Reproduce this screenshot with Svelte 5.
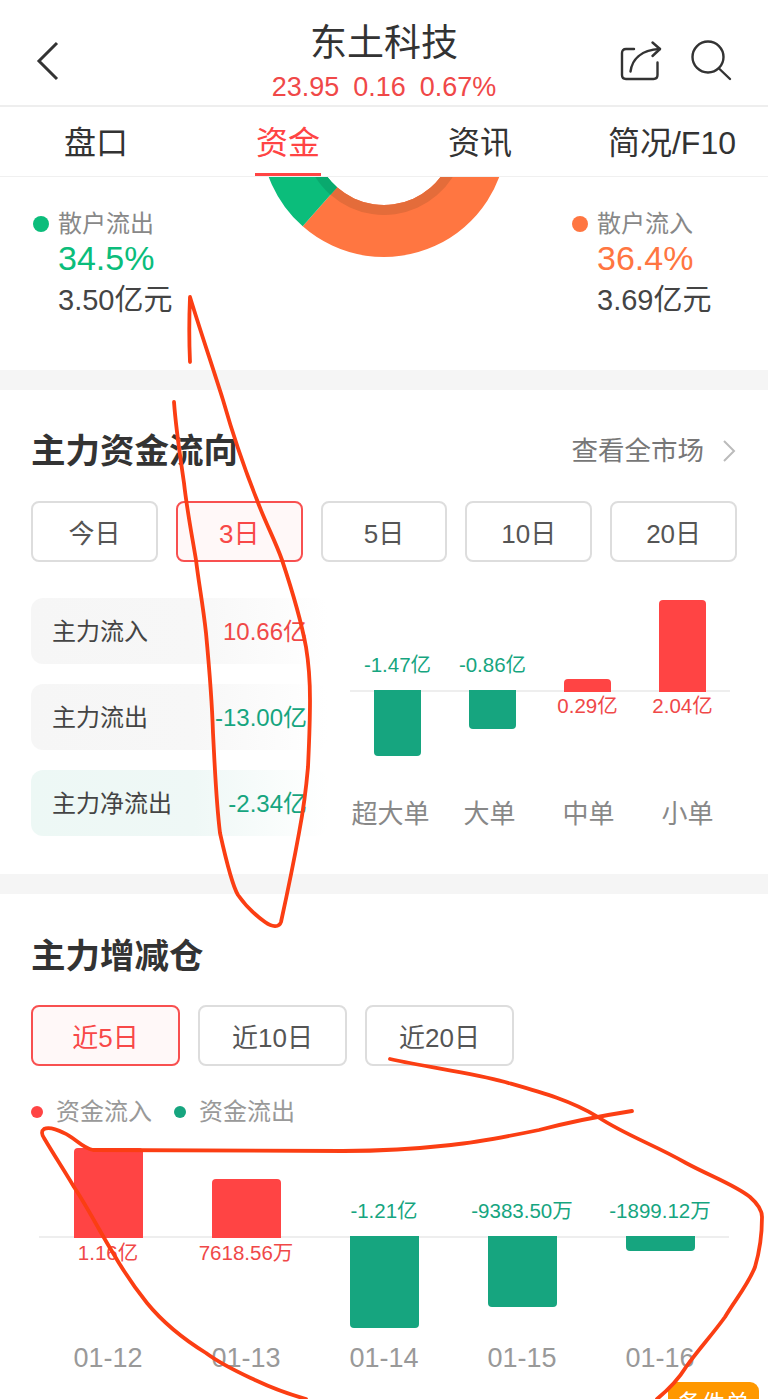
<script>
  const tabs = ['盘口', '资金', '资讯', '简况/F10'];
  const flowRanges = ['今日', '3日', '5日', '10日', '20日'];
  const holdRanges = ['近5日', '近10日', '近20日'];

  const flowRows = [
    { label: '主力流入', value: '10.66亿', tone: 'up' },
    { label: '主力流出', value: '-13.00亿', tone: 'down' },
    { label: '主力净流出', value: '-2.34亿', tone: 'down', net: true }
  ];

  // heights are in pixels above or below the zero line
  const orderBars = [
    { name: '超大单', value: '-1.47亿', height: 66, up: false },
    { name: '大单', value: '-0.86亿', height: 39, up: false },
    { name: '中单', value: '0.29亿', height: 13, up: true },
    { name: '小单', value: '2.04亿', height: 92, up: true }
  ];

  const dayBars = [
    { date: '01-12', value: '1.16亿', height: 90, up: true },
    { date: '01-13', value: '7618.56万', height: 59, up: true },
    { date: '01-14', value: '-1.21亿', height: 92, up: false },
    { date: '01-15', value: '-9383.50万', height: 71, up: false },
    { date: '01-16', value: '-1899.12万', height: 15, up: false }
  ];
</script>

<div class="page">
  <header class="topbar">
    <svg class="back" width="24" height="40" viewBox="0 0 24 40">
      <path d="M21 2 L3 20 L21 38" />
    </svg>
    <div class="stock">
      <div class="stock-name">东土科技</div>
      <div class="stock-quote">
        <span>23.95</span><span>0.16</span><span>0.67%</span>
      </div>
    </div>
    <div class="actions">
      <svg width="42" height="42" viewBox="0 0 42 42">
        <path d="M14 9 H6 Q2 9 2 13 V35 Q2 39 6 39 H33.5 Q37.5 39 37.5 35 V22.5" />
        <path d="M10.5 31.5 C12 20 20 10 40 9" />
        <path d="M32.5 2.5 L40 9 L32.5 16" />
      </svg>
      <svg width="42" height="42" viewBox="0 0 42 42">
        <circle cx="18" cy="17" r="15.5" />
        <path d="M29 28.5 L40 39" />
      </svg>
    </div>
  </header>

  <nav class="tabs">
    {#each tabs as tab, i}
      <div class="tab" class:on={i === 1}>{tab}</div>
    {/each}
  </nav>

  <section class="retail">
    <div class="side">
      <div class="side-title"><i class="dot green"></i>散户流出</div>
      <div class="side-pct green-text">34.5%</div>
      <div class="side-amt">3.50亿元</div>
    </div>
    <svg class="donut" width="262" height="81" viewBox="253 177 262 81">
      <path d="M302.7 226.3 A123 123 0 0 0 507 134 L455 134 A71 71 0 0 1 337.1 187.3 Z" fill="#ff7641" />
      <path d="M330.5 194.8 A81 81 0 0 0 465 134 L455 134 A71 71 0 0 1 337.1 187.3 Z" fill="#e46c3a" />
      <path d="M302.7 226.3 A123 123 0 0 1 261 134 L313 134 A71 71 0 0 0 337.1 187.3 Z" fill="#0bbd7b" />
      <path d="M330.5 194.8 A81 81 0 0 1 303 134 L313 134 A71 71 0 0 0 337.1 187.3 Z" fill="#0aa96e" />
    </svg>
    <div class="side right">
      <div class="side-title"><i class="dot orange"></i>散户流入</div>
      <div class="side-pct orange-text">36.4%</div>
      <div class="side-amt">3.69亿元</div>
    </div>
  </section>

  <section class="card flow">
    <div class="card-head">
      <h2>主力资金流向</h2>
      <div class="more">
        <span>查看全市场</span>
        <svg width="14" height="24" viewBox="0 0 14 24"><path d="M2 2 L12 12 L2 22" /></svg>
      </div>
    </div>

    <div class="ranges five">
      {#each flowRanges as r, i}
        <div class="range" class:on={i === 1}>{r}</div>
      {/each}
    </div>

    <div class="flow-body">
      <div class="rows">
        {#each flowRows as row}
          <div class="row" class:net={row.net}>
            <span>{row.label}</span>
            <span class="row-val {row.tone}">{row.value}</span>
          </div>
        {/each}
      </div>

      <div class="orders">
        <div class="order-chart">
          {#each orderBars as bar}
            <div class="col">
              <div class="above">
                {#if bar.up}
                  <div class="bar up-bar" style="height: {bar.height}px"></div>
                {:else}
                  <div class="bar-val down">{bar.value}</div>
                {/if}
              </div>
              <div class="below">
                {#if bar.up}
                  <div class="bar-val up">{bar.value}</div>
                {:else}
                  <div class="bar down-bar" style="height: {bar.height}px"></div>
                {/if}
              </div>
            </div>
          {/each}
        </div>
        <div class="order-names">
          {#each orderBars as bar}
            <div>{bar.name}</div>
          {/each}
        </div>
      </div>
    </div>
  </section>

  <section class="card hold">
    <div class="card-head">
      <h2>主力增减仓</h2>
    </div>

    <div class="ranges three">
      {#each holdRanges as r, i}
        <div class="range" class:on={i === 0}>{r}</div>
      {/each}
    </div>

    <div class="legend">
      <i class="mini red"></i><span>资金流入</span>
      <i class="mini teal"></i><span>资金流出</span>
    </div>

    <div class="day-chart">
      {#each dayBars as bar}
        <div class="col">
          <div class="above">
            {#if bar.up}
              <div class="bar up-bar" style="height: {bar.height}px"></div>
            {:else}
              <div class="bar-val down">{bar.value}</div>
            {/if}
          </div>
          <div class="below">
            {#if bar.up}
              <div class="bar-val up">{bar.value}</div>
            {:else}
              <div class="bar down-bar" style="height: {bar.height}px"></div>
            {/if}
          </div>
        </div>
      {/each}
    </div>
    <div class="day-names">
      {#each dayBars as bar}
        <div>{bar.date}</div>
      {/each}
    </div>
  </section>

  <div class="float-btn">备件单</div>

  <!-- hand drawn marks on top of the screenshot -->
  <svg class="marks" width="768" height="1399" viewBox="0 0 768 1399">
    <path d="M190 362 C189 340 189 320 190 297 C200 330 212 365 223 400 C233 435 245 470 257 500 C265 522 275 540 282 560 C292 590 301 620 306 647 C309 665 310 685 310 700 C310 725 309 745 308 767 C306 790 303 812 299 833 C295 855 288 890 281 922 C279 928 272 927 265 922 C255 915 245 905 238 895 C232 885 226 860 220 833 C216 800 215 770 213 733 C212 700 209 665 206 633 C203 605 199 585 196 560 C191 530 187 510 184 483 C180 455 176 430 174 402" />
    <path d="M390 1059 C430 1068 470 1072 505 1082 C540 1092 570 1100 598 1117 C625 1135 655 1145 686 1163 C710 1176 735 1185 750 1197 C758 1204 762 1210 762 1217 C762 1235 760 1250 755 1267 C748 1285 735 1300 725 1317 C712 1335 698 1350 686 1367 C678 1380 668 1390 657 1399" />
    <path d="M632 1111 C600 1116 570 1122 539 1130 C510 1136 480 1142 451 1145 C415 1149 380 1151 343 1151 L93 1150 C82 1148 74 1137 64 1133 C56 1129 48 1127 44 1129 C41 1131 42 1135 44 1138 C54 1155 64 1170 74 1187 C88 1208 100 1232 113 1253 C124 1272 135 1288 147 1303 C165 1325 185 1340 206 1353 C222 1365 238 1372 255 1380 C272 1388 288 1394 306 1399" />
  </svg>
</div>

<style>
  :global(body) {
    margin: 0;
    background: #fff;
  }

  .page {
    position: relative;
    width: 768px;
    height: 1399px;
    overflow: hidden;
    background: #fff;
    font-family: "Liberation Sans", "Noto Sans CJK SC", sans-serif;
    color: #333;
  }

  .topbar {
    height: 105px;
    display: grid;
    grid-template-columns: 1fr auto 1fr;
    align-items: start;
    border-bottom: 2px solid #eeeeee;
  }

  .back {
    margin: 41px 0 0 36px;
    fill: none;
    stroke: #333;
    stroke-width: 3;
  }

  .stock {
    text-align: center;
  }

  .stock-name {
    font-size: 37px;
    line-height: 44px;
    margin-top: 22px;
    color: #333;
  }

  .stock-quote {
    display: flex;
    justify-content: center;
    gap: 14px;
    font-size: 27px;
    line-height: 30px;
    margin-top: 6px;
    color: #f04848;
  }

  .actions {
    display: flex;
    justify-content: flex-end;
    gap: 28px;
    margin: 40px 36px 0 0;
  }

  .actions svg {
    fill: none;
    stroke: #333;
    stroke-width: 2.4;
    stroke-linecap: round;
    stroke-linejoin: round;
  }

  .tabs {
    height: 69px;
    display: grid;
    grid-template-columns: repeat(4, 192px);
    border-bottom: 1px solid #f0f0f0;
    font-size: 32px;
    color: #333;
  }

  .tab {
    justify-self: center;
    height: 66px;
    line-height: 72px;
    padding: 0 1px;
    white-space: nowrap;
  }

  .tab.on {
    color: #ff4444;
    border-bottom: 3px solid #ff4444;
  }

  .retail {
    height: 193px;
    display: grid;
    grid-template-columns: 253px 262px 1fr;
    border-bottom: 20px solid #f5f5f5;
  }

  .side {
    padding: 31px 0 0 33px;
  }

  .side.right {
    padding: 31px 0 0 57px;
  }

  .side-title {
    display: flex;
    align-items: center;
    font-size: 24px;
    line-height: 32px;
    color: #888;
    white-space: nowrap;
  }

  .dot {
    width: 16px;
    height: 16px;
    border-radius: 50%;
    margin-right: 9px;
  }

  .dot.green { background: #0bbd7b; }
  .dot.orange { background: #ff7641; }

  .side-pct {
    font-size: 34px;
    line-height: 38px;
    margin: -1px 0 0 25px;
  }

  .green-text { color: #0bbd7b; }
  .orange-text { color: #ff7641; }

  .side-amt {
    font-size: 29px;
    line-height: 36px;
    margin: 5px 0 0 25px;
    color: #444;
    white-space: nowrap;
  }

  .donut {
    display: block;
  }

  .card {
    border-bottom: 20px solid #f5f5f5;
  }

  .card-head {
    display: flex;
    justify-content: space-between;
    align-items: center;
    padding: 0 32px 0 31px;
  }

  h2 {
    margin: 0;
    font-size: 34.5px;
    line-height: 44px;
    font-weight: 700;
    color: #333;
  }

  .more {
    display: flex;
    align-items: center;
    gap: 18px;
    font-size: 26.5px;
    color: #777;
  }

  .more span {
    position: relative;
    top: -3px;
  }

  .more svg {
    fill: none;
    stroke: #bbb;
    stroke-width: 2;
  }

  .flow {
    height: 445px;
    padding-top: 39px;
  }

  .ranges {
    display: flex;
    gap: 18px;
    padding: 0 31px;
    margin-top: 28px;
  }

  .range {
    box-sizing: border-box;
    width: 127px;
    height: 61px;
    border: 2px solid #dddddd;
    border-radius: 8px;
    font-size: 26px;
    line-height: 63px;
    text-align: center;
    color: #555;
  }

  .range.on {
    border-color: #f85050;
    background: #fff8f8;
    color: #f84848;
  }

  .three .range {
    width: 149px;
  }

  .flow-body {
    display: flex;
    margin-top: 36px;
  }

  .rows {
    width: 297px;
    margin-left: 31px;
    display: flex;
    flex-direction: column;
    gap: 20px;
  }

  .row {
    box-sizing: border-box;
    height: 66px;
    display: flex;
    justify-content: space-between;
    align-items: center;
    padding: 0 21px 4px 21px;
    border-radius: 12px;
    background: linear-gradient(90deg, #f6f6f6, #f7f7f7 55%, #ffffff);
    font-size: 24px;
    color: #444;
  }

  .row.net {
    background: linear-gradient(90deg, #edf8f5, #eff8f6 55%, #ffffff);
  }

  .row-val.up, .bar-val.up { color: #f04848; }
  .row-val.down, .bar-val.down { color: #16a57f; }

  .orders {
    margin-left: 22px;
    width: 380px;
  }

  .order-chart {
    display: grid;
    grid-template-columns: repeat(4, 95px);
    grid-template-rows: 94px 88px;
  }

  .col {
    display: contents;
  }

  .above, .below {
    display: flex;
    flex-direction: column;
    align-items: center;
  }

  .above {
    grid-row: 1;
    justify-content: flex-end;
    border-bottom: 2px solid #eeeeee;
  }

  .below {
    grid-row: 2;
  }

  .bar {
    flex: none;
  }

  .up-bar {
    background: #ff4444;
    border-radius: 4px 4px 0 0;
    margin-bottom: -2px;
  }

  .down-bar {
    background: #16a57f;
    border-radius: 0 0 4px 4px;
    margin-top: -2px;
  }

  .order-chart .bar {
    width: 47px;
  }

  .bar-val {
    font-size: 20.5px;
    line-height: 24px;
    white-space: nowrap;
  }

  .above .bar-val {
    margin-bottom: 13px;
  }

  .order-chart .below .bar-val {
    margin-top: 2px;
  }

  .order-names {
    display: grid;
    grid-template-columns: repeat(4, 99px);
    margin: 19px 0 0 -9px;
    font-size: 26px;
    line-height: 30px;
    text-align: center;
    color: #888;
  }

  .hold {
    padding-top: 40px;
    border-bottom: none;
  }

  .hold .ranges {
    margin-top: 27px;
  }

  .legend {
    display: flex;
    align-items: center;
    margin: 30px 0 0 31px;
    font-size: 24px;
    line-height: 32px;
    color: #999;
  }

  .mini {
    width: 12px;
    height: 12px;
    border-radius: 50%;
    margin-right: 13px;
  }

  .mini.red { background: #ff4444; }
  .mini.teal { background: #16a57f; margin-left: 22px; }

  .day-chart {
    display: grid;
    grid-template-columns: repeat(5, 138px);
    grid-template-rows: 99px 98px;
    margin: 11px 0 0 39px;
  }

  .day-chart .bar {
    width: 69px;
  }

  .day-chart .below .bar-val {
    margin-top: 3px;
  }

  .day-names {
    display: grid;
    grid-template-columns: repeat(5, 138px);
    margin: 4px 0 0 39px;
    font-size: 27px;
    line-height: 36px;
    text-align: center;
    color: #999;
  }

  .float-btn {
    position: absolute;
    left: 668px;
    top: 1382px;
    width: 91px;
    height: 44px;
    border-radius: 9px 9px 0 0;
    background: #ff9800;
    color: #fff;
    font-size: 24px;
    line-height: 44px;
    text-align: center;
  }

  .marks {
    position: absolute;
    left: 0;
    top: 0;
    fill: none;
    stroke: #fb3e13;
    stroke-width: 3.8;
    stroke-linecap: round;
    stroke-linejoin: round;
    pointer-events: none;
  }
</style>
